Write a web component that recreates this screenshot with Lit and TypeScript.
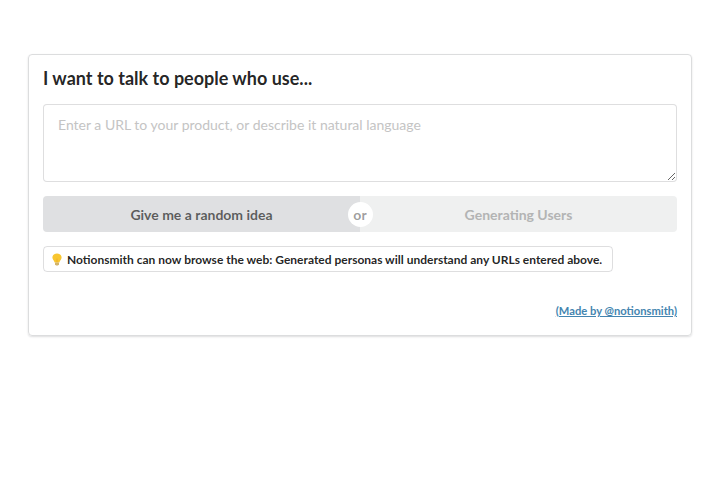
import { LitElement, html, css } from "lit";
import { customElement } from "lit/decorators.js";

@customElement("app-root")
export class AppRoot extends LitElement {
  static styles = css`
    :host { display: block; height: 480px; overflow: hidden; box-sizing: border-box; padding: 54px 28px; background: #fff; font-family: Lato, "Liberation Sans", sans-serif; font-size: 14px; line-height: 20px; color: rgba(0,0,0,.87); }
    * { box-sizing: border-box; }
    .card { height: 282px; border: 1px solid #dcddde; border-radius: 4px; box-shadow: 0 1px 2px 0 rgba(34,36,38,.15); padding: 11px 14px; display: flex; flex-direction: column; }
    h1 { margin: 0 0 14px; font-size: 18px; line-height: 24px; font-weight: 700; }
    textarea { display: block; width: 100%; height: 78px; margin: 0; padding: 10px 14px; border: 1px solid rgba(34,36,38,.15); border-radius: 4px; font: inherit; line-height: 20px; resize: vertical; outline: none; }
    textarea::placeholder { color: #c4c4c4; }
    .buttons { display: flex; height: 36px; margin-top: 14px; position: relative; }
    button { flex: 1; border: 0; padding: 0; font: 700 14px Lato, sans-serif; background: #dfe0e2; color: rgba(0,0,0,.6); border-radius: 4px 0 0 4px; }
    .busy { background: #eff0f0; color: #b3b4b4; border-radius: 0 4px 4px 0; }
    .or { position: absolute; left: calc(50% - 12.5px); top: 5.5px; width: 25px; height: 25px; border-radius: 50%; background: #fff; color: rgba(0,0,0,.4); font-weight: 700; line-height: 26px; text-align: center; }
    .label { align-self: flex-start; display: flex; align-items: center; height: 26px; width: 570px; margin-top: 14px; padding: 1px 8px 0; border: 1px solid rgba(34,36,38,.15); border-radius: 4px; font-size: 12px; font-weight: 700; white-space: nowrap; }
    .label span { padding-top: 1px; }
    .bulb { width: 10px; height: 13px; margin: 0 5px 0 0; }
    a { align-self: flex-end; margin-top: 29px; font-size: 11.2px; font-weight: 700; color: #4485b0; text-decoration: underline; }
  `;
  render() {
    return html`<div class="card">
      <h1>I want to talk to people who use...</h1>
      <textarea placeholder="Enter a URL to your product, or describe it natural language"></textarea>
      <div class="buttons"><button>Give me a random idea</button><span class="or">or</span><button class="busy">Generating Users</button></div>
      <div class="label"><svg class="bulb" viewBox="0 0 10 13"><path d="M5 .5C2.2.5.4 2.2.4 4.6c0 2 1.7 2.9 2.2 5h4.8c.5-2.1 2.2-3 2.2-5C9.6 2.2 7.8.5 5 .5Z" fill="#f8c630"/><path d="M5 5.5v4" stroke="#eeb026" stroke-width="1"/><path d="M3 9.4h4v1.8l-1 1.2H4l-1-1.1Z" fill="#d3b46a"/></svg><span>Notionsmith can now browse the web: Generated personas will understand any URLs entered above.</span></div>
      <a>(Made by @notionsmith)</a>
    </div>`;
  }
}
